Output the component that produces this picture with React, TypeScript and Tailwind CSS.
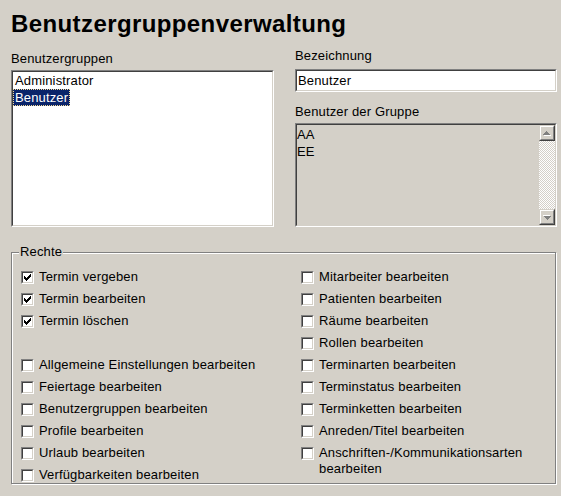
const linkeRechte = [
  { label: 'Termin vergeben', checked: true },
  { label: 'Termin bearbeiten', checked: true },
  { label: 'Termin löschen', checked: true },
  null,
  { label: 'Allgemeine Einstellungen bearbeiten', checked: false },
  { label: 'Feiertage bearbeiten', checked: false },
  { label: 'Benutzergruppen bearbeiten', checked: false },
  { label: 'Profile bearbeiten', checked: false },
  { label: 'Urlaub bearbeiten', checked: false },
  { label: 'Verfügbarkeiten bearbeiten', checked: false },
]

const rechteRechte = [
  'Mitarbeiter bearbeiten',
  'Patienten bearbeiten',
  'Räume bearbeiten',
  'Rollen bearbeiten',
  'Terminarten bearbeiten',
  'Terminstatus bearbeiten',
  'Terminketten bearbeiten',
  'Anreden/Titel bearbeiten',
  'Anschriften-/Kommunikationsarten bearbeiten',
]

// 2px sunken frame, Windows classic style
function Sunken({ className, innerClassName, children }: { className: string; innerClassName: string; children?: React.ReactNode }) {
  return (
    <div className={`border border-t-[#808080] border-l-[#808080] border-r-white border-b-white ${className}`}>
      <div className={`h-full border border-t-[#404040] border-l-[#404040] border-r-[#d4d0c8] border-b-[#d4d0c8] ${innerClassName}`}>
        {children}
      </div>
    </div>
  )
}

function Checkbox({ checked }: { checked: boolean }) {
  return (
    <span className="mt-[2px] block w-[13px] h-[13px] shrink-0 border border-t-[#808080] border-l-[#808080] border-r-white border-b-white">
      <span className="block w-full h-full bg-white border border-t-[#404040] border-l-[#404040] border-r-[#d4d0c8] border-b-[#d4d0c8]">
        {checked && (
          <svg width="7" height="7" viewBox="0 0 7 7" className="ml-[1px] mt-[1px]" shapeRendering="crispEdges">
            <rect x="6" y="0" width="1" height="3" fill="#000" />
            <rect x="5" y="1" width="1" height="3" fill="#000" />
            <rect x="4" y="2" width="1" height="3" fill="#000" />
            <rect x="3" y="3" width="1" height="3" fill="#000" />
            <rect x="2" y="4" width="1" height="3" fill="#000" />
            <rect x="1" y="3" width="1" height="3" fill="#000" />
            <rect x="0" y="2" width="1" height="3" fill="#000" />
          </svg>
        )}
      </span>
    </span>
  )
}

function Recht({ label, checked }: { label: string; checked: boolean }) {
  return (
    <div className="flex items-start gap-[5px] min-h-[22px]">
      <Checkbox checked={checked} />
      <span>{label}</span>
    </div>
  )
}

function ScrollButton({ up }: { up: boolean }) {
  return (
    <div className="w-[16px] h-[16px] border border-t-[#d4d0c8] border-l-[#d4d0c8] border-r-[#404040] border-b-[#404040]">
      <div className="h-full flex items-center justify-center bg-[#d4d0c8] border border-t-white border-l-white border-r-[#808080] border-b-[#808080]">
        <svg width="8" height="5" viewBox="0 0 8 5" shapeRendering="crispEdges" className={up ? '' : 'rotate-180'}>
          <path d="M4 1h1v1h1v1h1v1h1v1H1V4h1V3h1V2h1z" fill="#fff" />
          <path d="M3 0h1v1h1v1h1v1h1v1H0V3h1V2h1V1h1z" fill="#808080" />
        </svg>
      </div>
    </div>
  )
}

export default function App() {
  return (
    <div className="w-[561px] h-[496px] overflow-hidden bg-[#d4d0c8] pl-[11px] font-['Liberation_Sans',Arial,sans-serif] text-[13px] leading-[16px] tracking-[0.15px] text-black">
      <h1 className="pt-[10px] text-[24px] leading-[28px] font-bold tracking-[0.4px]">
        Benutzergruppenverwaltung
      </h1>

      <div className="flex gap-[21px]">
        <div className="w-[263px] shrink-0 pt-[13px]">
          <div>Benutzergruppen</div>
          <Sunken className="mt-[3px] h-[157px]" innerClassName="bg-white">
            <div className="leading-[17px]">
              <div className="px-[2px]">Administrator</div>
              <div>
                <span className="inline-block px-[2px] bg-[#0a246a] text-white outline-1 outline-dotted outline-[#f5db95] -outline-offset-1">
                  Benutzer
                </span>
              </div>
            </div>
          </Sunken>
        </div>

        <div className="w-[262px] shrink-0 pt-[10px]">
          <div>Bezeichnung</div>
          <Sunken className="mt-[5px] h-[23px]" innerClassName="bg-white flex items-center px-[1px]">
            <span>Benutzer</span>
          </Sunken>
          <div className="mt-[12px]">Benutzer der Gruppe</div>
          <Sunken className="mt-[3px] h-[104px]" innerClassName="bg-[#d4d0c8] flex">
            <div className="flex-1 leading-[17px] pt-[1px]">
              <div>AA</div>
              <div>EE</div>
            </div>
            <div className="w-[16px] flex flex-col">
              <ScrollButton up />
              <div className="flex-1 bg-[repeating-conic-gradient(#ffffff_0_25%,#d4d0c8_0_50%)] bg-[length:2px_2px]" />
              <ScrollButton up={false} />
            </div>
          </Sunken>
        </div>
      </div>

      <fieldset className="mt-[17px] w-[545px] h-[240px] px-[7px] pt-[9px] border border-[#808080] shadow-[inset_1px_1px_0_#ffffff,1px_1px_0_#ffffff]">
        <legend className="px-[1px] bg-[#d4d0c8]">Rechte</legend>
        <div className="grid grid-cols-[280px_1fr] pl-[2px]">
          <div>
            {linkeRechte.map((r, i) =>
              r ? <Recht key={i} label={r.label} checked={r.checked} /> : <div key={i} className="h-[22px]" />
            )}
          </div>
          <div>
            {rechteRechte.map((label) => (
              <Recht key={label} label={label} checked={false} />
            ))}
          </div>
        </div>
      </fieldset>
    </div>
  )
}
